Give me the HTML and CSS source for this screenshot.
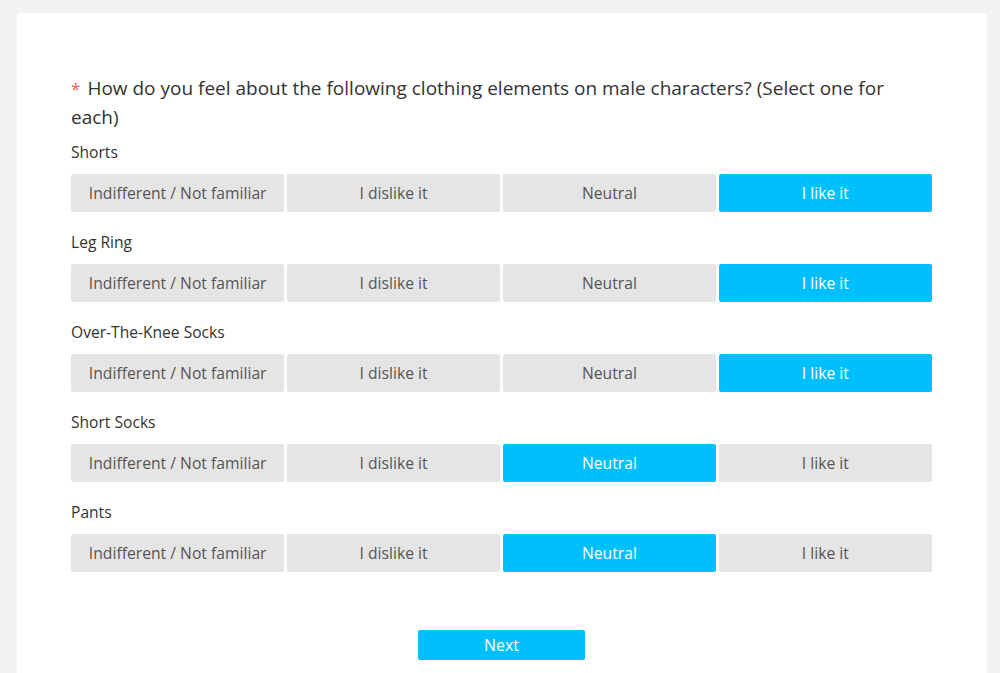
FILE: index.html
```html
<!DOCTYPE html>
<html>
<head>
<meta charset="utf-8">
<link rel="stylesheet" href="styles.css">
</head>
<body>
<div class="card">
  <div class="question"><span class="req">*</span>How do you feel about the following clothing elements on male characters? (Select one for each)</div>
  <div class="item">
    <div class="label">Shorts</div>
    <div class="opts"><div class="opt">Indifferent / Not familiar</div><div class="opt">I dislike it</div><div class="opt">Neutral</div><div class="opt on">I like it</div></div>
  </div>
  <div class="item">
    <div class="label">Leg Ring</div>
    <div class="opts"><div class="opt">Indifferent / Not familiar</div><div class="opt">I dislike it</div><div class="opt">Neutral</div><div class="opt on">I like it</div></div>
  </div>
  <div class="item">
    <div class="label">Over-The-Knee Socks</div>
    <div class="opts"><div class="opt">Indifferent / Not familiar</div><div class="opt">I dislike it</div><div class="opt">Neutral</div><div class="opt on">I like it</div></div>
  </div>
  <div class="item">
    <div class="label">Short Socks</div>
    <div class="opts"><div class="opt">Indifferent / Not familiar</div><div class="opt">I dislike it</div><div class="opt on">Neutral</div><div class="opt">I like it</div></div>
  </div>
  <div class="item">
    <div class="label">Pants</div>
    <div class="opts"><div class="opt">Indifferent / Not familiar</div><div class="opt">I dislike it</div><div class="opt on">Neutral</div><div class="opt">I like it</div></div>
  </div>
  <div class="actions"><button class="next">Next</button></div>
</div>
</body>
</html>
```
FILE: styles.css
```css
html, body { margin: 0; padding: 0; }
body {
  background: #f2f2f2;
  font-family: "Open Sans", "Noto Sans", sans-serif;
  color: #333;
  height: 673px;
  overflow: hidden;
}
.card {
  background: #fff;
  margin: 13px 13px 0 17px;
  padding: 61px 55px 40px 54px;
  min-height: 620px;
  border-radius: 3px;
}
.question {
  font-size: 19px;
  line-height: 29px;
  color: #333;
  margin-bottom: 10px;
}
.req { color: #e85d5d; font-size: 17px; line-height: 1; margin-right: 7px; }
.item { margin-bottom: 20px; }
.label { font-size: 15.6px; line-height: 20px; margin-bottom: 12px; color: #333; }
.opts { display: flex; gap: 2.5px; }
.opt {
  flex: 1;
  height: 38px;
  background: #e5e5e5;
  color: #555;
  font-size: 15.7px;
  display: flex;
  align-items: center;
  justify-content: center;
  border-radius: 2px;
}
.opt.on { background: #00bfff; color: #fff; }
.actions { display: flex; justify-content: center; padding-top: 38px; }
.next {
  width: 167px;
  height: 30px;
  background: #00bfff;
  color: #fff;
  border: none;
  border-radius: 2px;
  font-family: inherit;
  font-size: 16px;
}
```
